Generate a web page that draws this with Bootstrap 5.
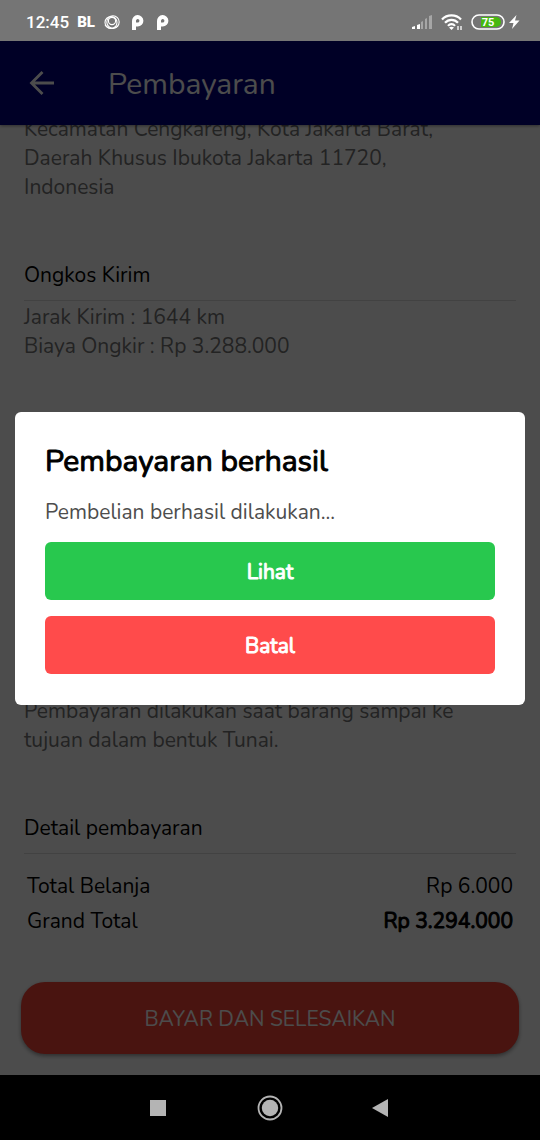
<!DOCTYPE html>
<html lang="id">
<head>
<meta charset="utf-8">
<meta name="viewport" content="width=device-width, initial-scale=1">
<title>Pembayaran</title>
<link href="https://cdn.jsdelivr.net/npm/bootstrap@5.3.0/dist/css/bootstrap.min.css" rel="stylesheet">
<style>
  body { font-family: Nunito, Lato, "Open Sans", sans-serif; font-size: 21px; line-height: 29px; color: #000; background: #000; }
  .status-bar { height: 41px; background: #757575; color: #fff; font: 500 17px/24px Roboto, sans-serif; padding: 3px 20px 0 26px; }
  .carrier { font-size: 15px; font-weight: 900; }
  .app-bar { height: 84px; background: #000080; color: #fff; padding: 4px 24px 0 24px; z-index: 1; box-shadow: 0 1px 3px rgba(0,0,0,.4); }
  .app-title { font-size: 30px; line-height: 40px; margin: 0 0 0 48px; font-weight: 400; }
  .page-body { background: #fff; padding: 0 24px 21px; }
  .muted-copy { color: #757575; }
  .scrolled-copy { margin-top: -10px; }
  .section-title { font-size: 21px; line-height: 29px; font-weight: 400; margin: 0; padding-bottom: 10px; border-bottom: 1px solid #dcdcdc; }
  .section-title + .muted-copy { padding-top: 2px; }
  .section-gap { margin-top: 59px; }
  .totals { margin-top: 15px; }
  .totals th, .totals td { padding: 3px; font-weight: 400; }
  .totals .grand, .dialog-title, .dialog-btn { font-weight: 400; -webkit-text-stroke: 1px currentColor; }
  .pay-btn { height: 72px; margin: 43px -3px 0; padding: 9px 12px 6px; border-radius: 24px; background: #f44336; color: #fff; font-size: 21px; box-shadow: 0 2px 4px rgba(0,0,0,.4); }
  .scrim { background: rgba(0,0,0,.7); z-index: 2; padding: 0 15px; }
  .dialog-card { background: #fff; border-radius: 6px; padding: 31px 30px; }
  .dialog-title { font-size: 30px; line-height: 38px; margin: 0 0 17px; }
  .dialog-copy { color: #4d4d4d; margin: 0 0 15px; }
  .dialog-btn { height: 58px; padding: 9px 12px 5px; border-radius: 6px; color: #fff; font-size: 21px; }
  .btn-view { background: #28c84e; }
  .btn-cancel { background: #ff4b4b; }
  .system-nav { height: 65px; background: #000; }
  .nav-keys { gap: 84px; }
</style>
</head>
<body>
<div class="d-flex flex-column vh-100">
  <div class="status-bar d-flex align-items-center flex-shrink-0">
    <span>12:45</span>
    <span class="carrier ms-2">BL</span>
    <svg class="ms-2" width="18" height="18" viewBox="0 0 18 18" fill="none" stroke="#fff" stroke-width="1.1" aria-hidden="true"><circle cx="9" cy="8" r="3.6"/><circle cx="8" cy="9.5" r="6"/><circle cx="10" cy="9" r="6.2"/><path d="M2 12c3 4 10 5 13 1"/></svg>
    <svg class="ms-2" width="16" height="18" viewBox="0 0 16 18" fill="none" stroke="#fff" stroke-width="4" aria-hidden="true"><path d="M5 17V8A3.700 3.700 0 1 1 8.700 11.500H7"/></svg>
    <svg class="ms-2" width="16" height="18" viewBox="0 0 16 18" fill="none" stroke="#fff" stroke-width="4" aria-hidden="true"><path d="M6 17V8A3.700 3.700 0 1 1 9.700 11.500H8"/></svg>
    <svg class="ms-auto" width="22" height="16" viewBox="0 0 22 16" aria-hidden="true"><g fill="#fff"><path d="M1 15v-2l3-1v3z"/><path d="M6 15v-4l3-1v5z"/></g><g fill="#a6a6a6"><path d="M10 15V8l2-1v8z"/><path d="M14 15V5l2-1v11z"/><path d="M18 15V2l3-1v14z"/></g></svg>
    <svg class="ms-2" width="22" height="18" viewBox="0 0 22 18" fill="none" stroke="#fff" stroke-width="2.200" aria-hidden="true"><path d="M1 6.500C6 1 15 1 20 6.500M4 9.800c3.500-4 9.500-4 13 0M7 12.900c2-2.300 5-2.300 7 0"/><path d="M8 14.500q2.500-1.500 5 0L10.500 17z" fill="#fff" stroke="none"/><path d="M17 13v4M20 13v4" stroke-width="1.300"/></svg>
    <svg class="ms-2" width="34" height="16" viewBox="0 0 34 16" role="img" aria-label="75%"><rect x="1" y="1" width="32" height="14" rx="7" fill="none" stroke="#fff" stroke-width="1.600"/><path d="M10 3h15a5 5 0 0 1 0 10H10z" fill="#47b80e"/><text x="17" y="12" text-anchor="middle" font-family="Roboto, sans-serif" font-size="11" font-weight="700" fill="#fff">75</text></svg>
    <svg class="ms-1" width="11" height="16" viewBox="0 0 11 16" fill="#fff" aria-hidden="true"><path d="M7.500 1 0 9h4.500L3 15l7.500-8.500H6z"/></svg>
  </div>

  <div class="position-relative flex-grow-1 d-flex flex-column overflow-hidden">
    <header class="app-bar d-flex align-items-center flex-shrink-0">
      <button type="button" class="btn p-0 border-0 d-flex" aria-label="Kembali">
        <svg width="36" height="36" viewBox="0 0 36 36" fill="none" stroke="#fff" stroke-width="2.800"><path d="M30 16H8M18.500 5 7.500 16l11 11"/></svg>
      </button>
      <h1 class="app-title">Pembayaran</h1>
    </header>

    <main class="page-body flex-grow-1 d-flex flex-column">
      <p class="muted-copy scrolled-copy mb-0">Kecamatan Cengkareng, Kota Jakarta Barat,<br>Daerah Khusus Ibukota Jakarta 11720,<br>Indonesia</p>
      <section class="section-gap">
        <h2 class="section-title">Ongkos Kirim</h2>
        <p class="muted-copy mb-0">Jarak Kirim : 1644 km<br>Biaya Ongkir : Rp 3.288.000</p>
      </section>
      <section class="mt-auto">
        <p class="muted-copy mb-0">Pembayaran dilakukan saat barang sampai ke<br>tujuan dalam bentuk Tunai.</p>
      </section>
      <section class="section-gap">
        <h2 class="section-title">Detail pembayaran</h2>
        <table class="totals w-100">
          <tr><th scope="row">Total Belanja</th><td class="text-end">Rp 6.000</td></tr>
          <tr><th scope="row">Grand Total</th><td class="grand text-end">Rp 3.294.000</td></tr>
        </table>
      </section>
      <button type="button" class="pay-btn btn border-0 flex-shrink-0">BAYAR DAN SELESAIKAN</button>
    </main>

    <div class="scrim position-absolute top-0 start-0 w-100 h-100 d-flex align-items-center">
      <div class="dialog-card w-100" role="dialog" aria-modal="true" aria-labelledby="dialogTitle">
        <h2 class="dialog-title" id="dialogTitle">Pembayaran berhasil</h2>
        <p class="dialog-copy">Pembelian berhasil dilakukan...</p>
        <div class="d-grid gap-3">
          <button type="button" class="btn border-0 dialog-btn btn-view">Lihat</button>
          <button type="button" class="btn border-0 dialog-btn btn-cancel">Batal</button>
        </div>
      </div>
    </div>
  </div>

  <nav class="system-nav d-flex justify-content-center align-items-center flex-shrink-0" aria-label="Navigasi sistem">
    <div class="nav-keys d-flex">
      <button type="button" class="btn p-0 border-0 d-flex" aria-label="Aplikasi terbaru"><svg width="28" height="28" viewBox="0 0 28 28"><path d="M6 6h16v16H6z" fill="#b4b4b4"/></svg></button>
      <button type="button" class="btn p-0 border-0 d-flex" aria-label="Beranda"><svg width="28" height="28" viewBox="0 0 28 28"><circle cx="14" cy="14" r="11.500" fill="none" stroke="#b4b4b4" stroke-width="1.800"/><circle cx="14" cy="14" r="8.200" fill="#b4b4b4"/></svg></button>
      <button type="button" class="btn p-0 border-0 d-flex" aria-label="Kembali ke layar sebelumnya"><svg width="28" height="28" viewBox="0 0 28 28"><path d="M4 14 20 5v18z" fill="#b4b4b4"/></svg></button>
    </div>
  </nav>
</div>
<script src="https://cdn.jsdelivr.net/npm/bootstrap@5.3.0/dist/js/bootstrap.bundle.min.js"></script>
</body>
</html>
